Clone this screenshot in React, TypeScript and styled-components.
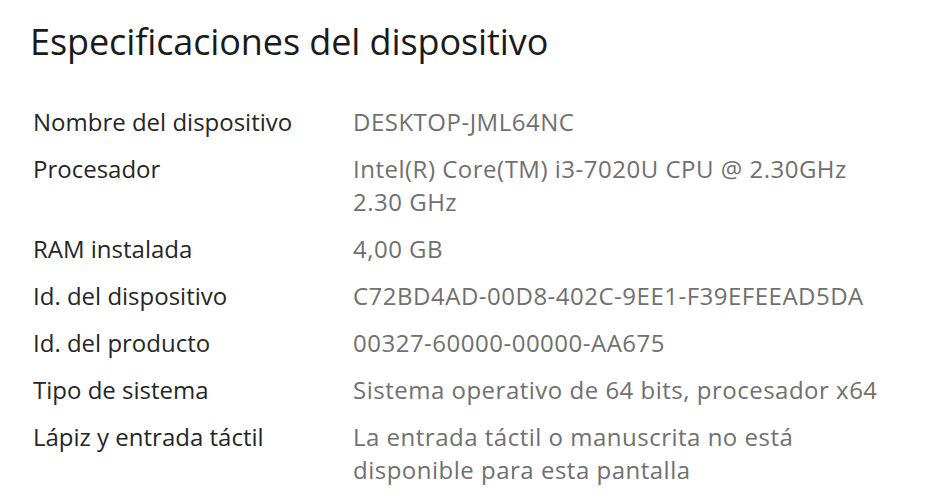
import React from "react";
import styled, { createGlobalStyle } from "styled-components";

const Global = createGlobalStyle`
  html, body { margin: 0; padding: 0; background: #ffffff; }
  body { font-family: "Open Sans", "Noto Sans", sans-serif; }
`;

const Page = styled.div`
  width: 930px;
  height: 500px;
  box-sizing: border-box;
  padding: 19px 0 0 30px;
  background: #ffffff;
  overflow: hidden;
`;

const Title = styled.h1`
  margin: 0 0 40px 0;
  font-weight: 400;
  font-size: 36px;
  line-height: 46px;
  color: #1b1b1b;
  letter-spacing: -0.1px;
`;

const SpecList = styled.dl`
  margin: 0;
  padding-left: 3px;
  display: grid;
  grid-template-columns: 320px 1fr;
  row-gap: 14px;
  font-size: 24px;
  line-height: 33px;
`;

const Label = styled.dt`
  margin: 0;
  color: #262626;
  white-space: nowrap;
`;

const Value = styled.dd`
  margin: 0;
  color: #707070;
  letter-spacing: 0.5px;
  white-space: nowrap;
`;

const specs: [string, string[]][] = [
  ["Nombre del dispositivo", ["DESKTOP-JML64NC"]],
  ["Procesador", ["Intel(R) Core(TM) i3-7020U CPU @ 2.30GHz", "2.30 GHz"]],
  ["RAM instalada", ["4,00 GB"]],
  ["Id. del dispositivo", ["C72BD4AD-00D8-402C-9EE1-F39EFEEAD5DA"]],
  ["Id. del producto", ["00327-60000-00000-AA675"]],
  ["Tipo de sistema", ["Sistema operativo de 64 bits, procesador x64"]],
  ["Lápiz y entrada táctil", ["La entrada táctil o manuscrita no está", "disponible para esta pantalla"]],
];

export default function App() {
  return (
    <>
      <Global />
      <Page>
        <Title>Especificaciones del dispositivo</Title>
        <SpecList>
          {specs.map(([label, lines]) => (
            <React.Fragment key={label}>
              <Label>{label}</Label>
              <Value>
                {lines.map((l, i) => (
                  <div key={i}>{l}</div>
                ))}
              </Value>
            </React.Fragment>
          ))}
        </SpecList>
      </Page>
    </>
  );
}
